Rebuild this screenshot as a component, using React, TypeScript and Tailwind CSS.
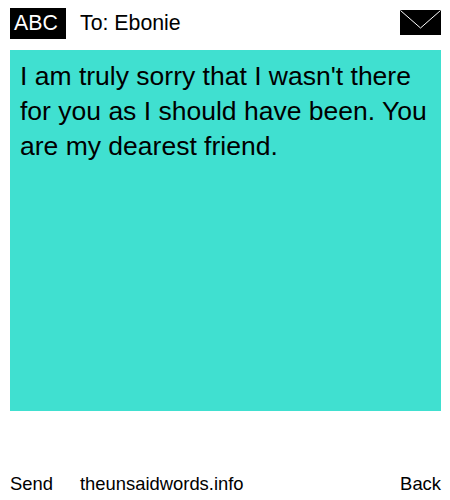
export default function App() {
  return (
    <div className="w-[450px] h-[500px] bg-white text-black font-['Liberation_Sans',Arial,sans-serif] flex flex-col pl-[10px] pr-[9px] pt-2">
      <div className="flex items-center h-[31px] mb-[11px]">
        <div className="bg-black text-white w-[56px] h-[31px] flex items-center pl-[4px] text-[21.3px]">ABC</div>
        <div className="ml-[14px] text-[21.3px] flex-1">To: Ebonie</div>
        <svg width="41" height="25" viewBox="0 0 41 25" className="block self-start mt-[2px]">
          <rect width="41" height="25" fill="#000" />
          <path d="M0.5 0.5 L20.5 18 L40.5 0.5" stroke="#fff" strokeWidth="1" fill="none" />
        </svg>
      </div>
      <div className="bg-[#40e0d0] h-[361px] pl-[10px] pr-[4px] py-[9px] text-[26.5px] leading-[35px]">
        I am truly sorry that I wasn't there for you as I should have been. You are my dearest friend.
      </div>
      <div className="flex-1 flex items-end pb-[2px] text-[18.4px] leading-[28px]">
        <span className="w-[70px]">Send</span>
        <span className="flex-1">theunsaidwords.info</span>
        <span>Back</span>
      </div>
    </div>
  );
}
